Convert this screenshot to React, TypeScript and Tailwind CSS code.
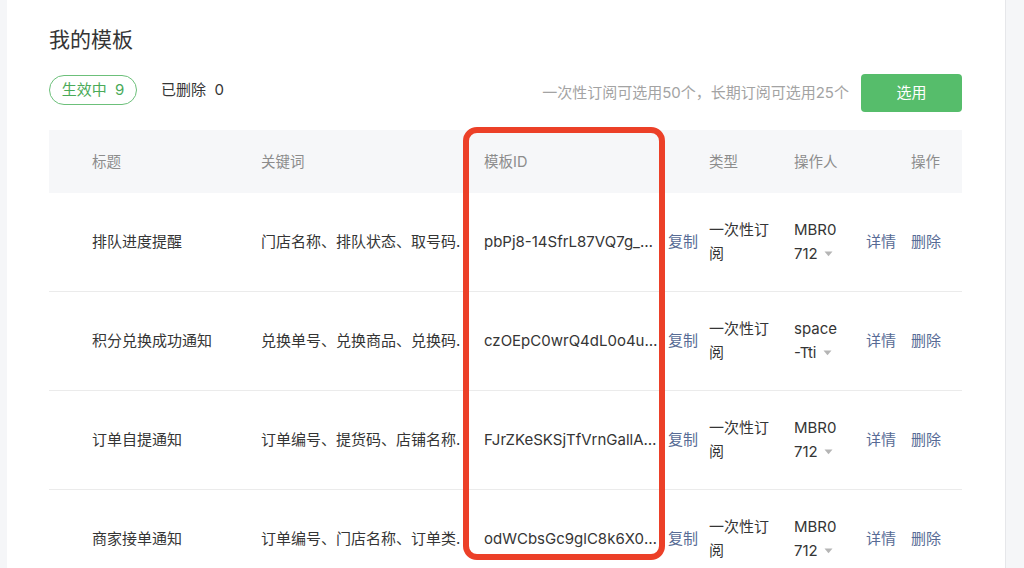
import React from "react";

const rows = [
  { title: "排队进度提醒", kw: "门店名称、排队状态、取号码、预计等待时间", id: "pbPj8-14SfrL87VQ7g_xYzAbc12", op: ["MBR0", "712"] },
  { title: "积分兑换成功通知", kw: "兑换单号、兑换商品、兑换码、兑换时间", id: "czOEpC0wrQ4dL0o4uKq9Lm3Zp", op: ["space", "-Tti"] },
  { title: "订单自提通知", kw: "订单编号、提货码、店铺名称、提货地址", id: "FJrZKeSKSjTfVrnGallAbX0q", op: ["MBR0", "712"] },
  { title: "商家接单通知", kw: "订单编号、门店名称、订单类型、下单时间", id: "odWCbsGc9glC8k6X0pQrT7u", op: ["MBR0", "712"] },
];

function Caret() {
  return (
    <svg width="9" height="6" viewBox="0 0 9 6" className="ml-[6px] inline-block align-middle">
      <path d="M0.5 0.5 H8.5 L4.5 5.2 Z" fill="#b5b5b5" />
    </svg>
  );
}

export default function App() {
  return (
    <div
      className="relative flex h-[568px] w-[1024px] overflow-hidden bg-[#f5f6f8] text-[15px] text-[#353535]"
      style={{ fontFamily: 'Inter, "Noto Sans CJK SC", sans-serif' }}
    >
      <div className="ml-[7px] flex w-[998px] flex-col bg-white pl-[42px] pr-[43px] pt-[26px]">
        <h1 className="text-[21px] font-normal leading-[28px] text-[#353535]">我的模板</h1>

        <div className="mt-[20px] flex items-start justify-between">
          <div className="mt-[1px] flex h-[30px] items-center">
            <div className="flex h-[30px] w-[88px] items-center justify-center rounded-full border border-[#6cc07a] text-[#4aaa59]">
              生效中&nbsp;&nbsp;9
            </div>
            <div className="ml-[24px] text-[#353535]">已删除&nbsp;&nbsp;0</div>
          </div>
          <div className="flex h-[38px] items-center">
            <span className="text-[15px] text-[#a3a3a3]">一次性订阅可选用50个，长期订阅可选用25个</span>
            <button className="ml-[12px] flex h-[38px] w-[101px] items-center justify-center rounded-[4px] bg-[#56bd6b] text-white">
              选用
            </button>
          </div>
        </div>

        <div className="mt-[18px] flex w-[913px] flex-col">
          <div className="flex h-[63px] items-center bg-[#f6f7f9] text-[14.5px] text-[#8c8c8c]">
            <div className="w-[212px] pl-[43px]">标题</div>
            <div className="w-[223px]">关键词</div>
            <div className="w-[225px]">模板ID</div>
            <div className="w-[85px]">类型</div>
            <div className="w-[72px]">操作人</div>
            <div className="w-[45px]"></div>
            <div>操作</div>
          </div>

          {rows.map((r, i) => (
            <div key={i} className="flex h-[99px] shrink-0 items-center border-b border-[#ebebeb]">
              <div className="w-[212px] pl-[43px]">{r.title}</div>
              <div className="w-[223px]">
                <div className="w-[199px] overflow-hidden">
                  <div className="w-[212px] truncate">{r.kw}</div>
                </div>
              </div>
              <div className="w-[184px] pr-[8px]">
                <div className="truncate">{r.id}</div>
              </div>
              <div className="w-[41px] whitespace-nowrap text-[#576b95]">复制</div>
              <div className="w-[85px]">
                <div className="w-[62px] leading-[24px]">一次性订阅</div>
              </div>
              <div className="w-[72px] leading-[24px]">
                <div>{r.op[0]}</div>
                <div className="flex items-center">
                  {r.op[1]}
                  <Caret />
                </div>
              </div>
              <div className="flex gap-[15px] text-[#576b95]">
                <span>详情</span>
                <span>删除</span>
              </div>
            </div>
          ))}
        </div>
      </div>
      <div className="flex-1 border-l border-[#e6e7ea] bg-[#f5f6f8]" />

      <div className="pointer-events-none absolute left-[463px] top-[127px] h-[433px] w-[202px] rounded-[14px] border-[6px] border-[#ec4028]" />
    </div>
  );
}
